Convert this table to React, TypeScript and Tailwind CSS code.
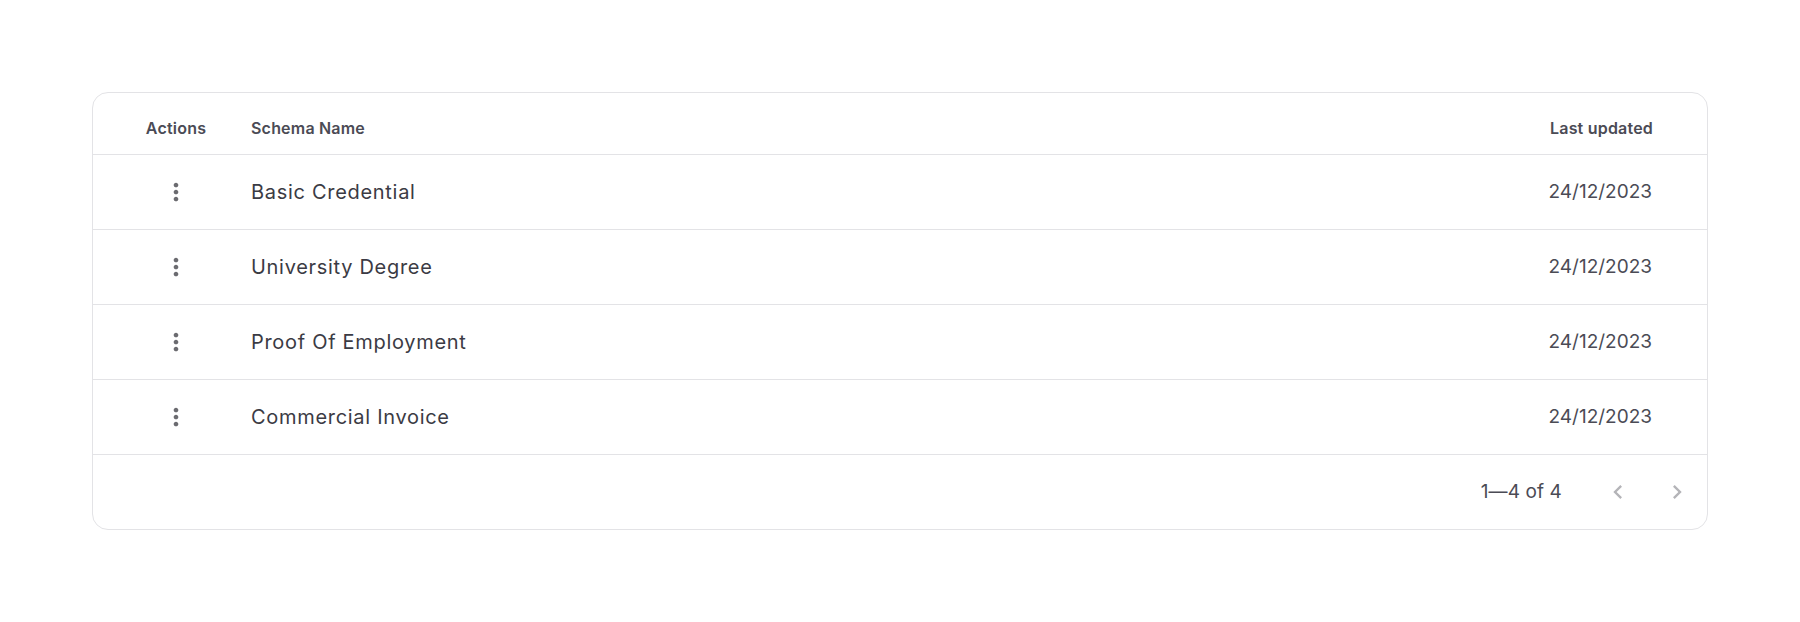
import React from "react";

const rows = [
  { name: "Basic Credential", updated: "24/12/2023" },
  { name: "University Degree", updated: "24/12/2023" },
  { name: "Proof Of Employment", updated: "24/12/2023" },
  { name: "Commercial Invoice", updated: "24/12/2023" },
];

const MoreVert = () => (
  <svg width="28" height="28" viewBox="0 0 24 24" fill="#6b6b70">
    <path d="M12 8c1.1 0 2-.9 2-2s-.9-2-2-2-2 .9-2 2 .9 2 2 2zm0 2c-1.1 0-2 .9-2 2s.9 2 2 2 2-.9 2-2-.9-2-2-2zm0 6c-1.1 0-2 .9-2 2s.9 2 2 2 2-.9 2-2-.9-2-2-2z" />
  </svg>
);

const Chevron = ({ dir }: { dir: "left" | "right" }) => (
  <svg width="28" height="28" viewBox="0 0 24 24" fill="#b4b4b8">
    {dir === "left" ? (
      <path d="M15.41 7.41 14 6l-6 6 6 6 1.41-1.41L10.83 12z" />
    ) : (
      <path d="M10 6 8.59 7.41 13.17 12l-4.58 4.59L10 18l6-6z" />
    )}
  </svg>
);

export default function App() {
  return (
    <div className="w-[1800px] h-[622px] bg-white px-[92px] pt-[92px]" style={{ fontFamily: "Inter, 'Liberation Sans', sans-serif" }}>
      <div className="rounded-2xl border border-[#e3e3e6] overflow-hidden">
        {/* header */}
        <div className="flex items-center h-[62px] border-b border-[#e3e3e6] pl-[8px] pr-[54px] text-[16px] tracking-[0.2px] font-semibold text-[#4b4b55]">
          <div className="w-[150px] text-center pt-[8px]">Actions</div>
          <div className="flex-1 pt-[8px]">Schema Name</div>
          <div className="text-right pt-[8px]">Last updated</div>
        </div>

        {rows.map((r) => (
          <div key={r.name} className="flex items-center h-[75px] border-b border-[#e3e3e6] pl-[8px] pr-[55px]">
            <div className="w-[150px] flex justify-center">
              <MoreVert />
            </div>
            <div className="flex-1 text-[20px] tracking-[0.7px] text-[#3b3b44]">{r.name}</div>
            <div className="text-[19px] text-[#4b4b55]">{r.updated}</div>
          </div>
        ))}

        {/* pagination */}
        <div className="flex items-center justify-end h-[74px] pr-[10px]">
          <span className="text-[19px] tracking-[0.1px] text-[#4b4b55] mr-[36px]">1—4 of 4</span>
          <button className="w-[40px] h-[40px] flex items-center justify-center mr-[19px]">
            <Chevron dir="left" />
          </button>
          <button className="w-[40px] h-[40px] flex items-center justify-center">
            <Chevron dir="right" />
          </button>
        </div>
      </div>
    </div>
  );
}
